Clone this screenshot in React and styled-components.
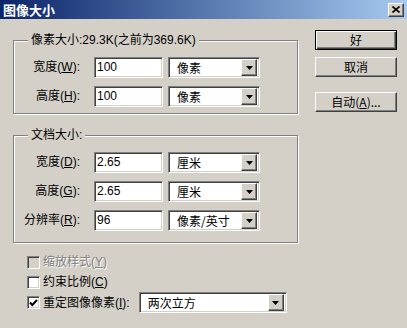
import React from "react";
import styled, { createGlobalStyle } from "styled-components";

const face = "#d4d0c8";
const shadow = "#808080";
const dark = "#404040";

const GlobalStyle = createGlobalStyle`
  html, body {
    margin: 0;
    padding: 0;
    background: ${face};
  }
  body {
    font-family: "Liberation Sans", "Noto Sans CJK SC", sans-serif;
    font-size: 12px;
    color: #000;
  }
`;

const Dialog = styled.div`
  width: 407px;
  height: 328px;
  background: ${face};
  display: flex;
  flex-direction: column;
  overflow: hidden;
`;

const TitleBar = styled.div`
  height: 19px;
  flex: none;
  display: flex;
  align-items: center;
  justify-content: space-between;
  padding: 0 3px 0 3px;
  background: linear-gradient(to right, #0a246a, #a6caf0);
`;

const Title = styled.span`
  color: #fff;
  font-family: "Noto Sans CJK SC", sans-serif;
  font-weight: bold;
  font-size: 13px;
  line-height: 19px;
`;

const raised = `
  border: 1px solid;
  border-color: #fff ${dark} ${dark} #fff;
  box-shadow: inset -1px -1px 0 ${shadow}, inset 1px 1px 0 ${face};
  background: ${face};
`;

const sunken = `
  border: 1px solid;
  border-color: ${shadow} #fff #fff ${shadow};
  box-shadow: inset 1px 1px 0 ${dark}, inset -1px -1px 0 ${face};
`;

const CloseButton = styled.div`
  width: 16px;
  height: 14px;
  box-sizing: border-box;
  ${raised}
  display: flex;
  align-items: center;
  justify-content: center;
`;

const Body = styled.div`
  display: flex;
  padding: 11px 0 0 13px;
`;

const LeftColumn = styled.div`
  width: 285px;
  padding-top: 3px;
  display: flex;
  flex-direction: column;
`;

const Group = styled.fieldset`
  margin: 0;
  margin-top: ${(p) => p.$gap || 0}px;
  padding: 0;
  width: 285px;
  box-sizing: border-box;
  border: 1px solid ${shadow};
  box-shadow: inset 1px 1px 0 #fff, 1px 1px 0 #fff;
`;

const Legend = styled.legend`
  margin-left: 14px;
  padding: 0 3px;
  line-height: 14px;
  background: ${face};
`;

const Rows = styled.div`
  display: flex;
  flex-direction: column;
  gap: 8px;
  padding: 10px 0 ${(p) => p.$bottom}px 0;
`;

const Row = styled.div`
  display: flex;
  align-items: center;
  height: 21px;
`;

const Label = styled.span`
  width: 66px;
  margin-right: 14px;
  text-align: right;
  white-space: nowrap;
  line-height: 21px;
`;

const TextBox = styled.div`
  width: 69px;
  height: 21px;
  box-sizing: border-box;
  ${sunken}
  background: #fff;
  padding-left: 2px;
  line-height: 19px;
`;

const SelectBox = styled.div`
  width: ${(p) => p.$width}px;
  height: 21px;
  margin-left: ${(p) => p.$left}px;
  box-sizing: border-box;
  ${sunken}
  background: #fff;
  padding: 2px;
  display: flex;
  align-items: center;
`;

const SelectValue = styled.span`
  flex: 1;
  padding-left: 6px;
  font-family: "Noto Sans CJK SC", sans-serif;
  line-height: 17px;
  white-space: nowrap;
`;

const ArrowButton = styled.div`
  width: 16px;
  height: 17px;
  box-sizing: border-box;
  ${raised}
  display: flex;
  align-items: center;
  justify-content: center;
`;

const Checks = styled.div`
  margin-top: 9px;
  display: flex;
  flex-direction: column;
`;

const CheckRow = styled.div`
  display: flex;
  align-items: center;
  height: ${(p) => p.$height || 20}px;
  padding-left: 14px;
  color: ${(p) => (p.$disabled ? shadow : "#000")};
  text-shadow: ${(p) => (p.$disabled ? "1px 1px 0 #fff" : "none")};
`;

const CheckBox = styled.div`
  width: 13px;
  height: 13px;
  box-sizing: border-box;
  ${sunken}
  background: ${(p) => (p.$disabled ? face : "#fff")};
  margin-right: 3px;
  display: flex;
  align-items: center;
  justify-content: center;
`;

const CheckText = styled.span`
  line-height: 20px;
  white-space: nowrap;
`;

const ButtonColumn = styled.div`
  width: 82px;
  margin-left: 17px;
  display: flex;
  flex-direction: column;
`;

const Button = styled.div`
  height: 20px;
  margin-top: ${(p) => p.$gap || 0}px;
  box-sizing: border-box;
  ${(p) =>
    p.$default
      ? `border: 1px solid #000;
         box-shadow: inset 1px 1px 0 #fff, inset -1px -1px 0 ${dark}, inset -2px -2px 0 ${shadow};
         background: ${face};`
      : raised}
  display: flex;
  align-items: center;
  justify-content: center;
  font-family: "Noto Sans CJK SC", sans-serif;
  line-height: 18px;
`;

const Arrow = () => (
  <svg width="7" height="4" viewBox="0 0 7 4">
    <path d="M0 0h7L3.5 4z" fill="#000" />
  </svg>
);

const Check = () => (
  <svg width="9" height="8" viewBox="0 0 9 8">
    <path d="M1 3.5 L3.3 6 L8 1" stroke="#000" strokeWidth="2" fill="none" />
  </svg>
);

const Select = ({ value, width = 92, left = 5 }) => (
  <SelectBox $width={width} $left={left}>
    <SelectValue>{value}</SelectValue>
    <ArrowButton>
      <Arrow />
    </ArrowButton>
  </SelectBox>
);

const Field = ({ label, u, value, unit }) => (
  <Row>
    <Label>
      {label}(<u>{u}</u>):
    </Label>
    <TextBox>{value}</TextBox>
    <Select value={unit} />
  </Row>
);

export default function App() {
  return (
    <Dialog>
      <GlobalStyle />
      <TitleBar>
        <Title>图像大小</Title>
        <CloseButton>
          <svg width="8" height="7" viewBox="0 0 8 7">
            <path d="M0.5 0.5L7.5 6.5M7.5 0.5L0.5 6.5" stroke="#000" strokeWidth="1.6" />
          </svg>
        </CloseButton>
      </TitleBar>
      <Body>
        <LeftColumn>
          <Group>
            <Legend>像素大小:29.3K(之前为369.6K)</Legend>
            <Rows $bottom={6}>
              <Field label="宽度" u="W" value="100" unit="像素" />
              <Field label="高度" u="H" value="100" unit="像素" />
            </Rows>
          </Group>
          <Group $gap={14}>
            <Legend>文档大小:</Legend>
            <Rows $bottom={11}>
              <Field label="宽度" u="D" value="2.65" unit="厘米" />
              <Field label="高度" u="G" value="2.65" unit="厘米" />
              <Field label="分辨率" u="R" value="96" unit="像素/英寸" />
            </Rows>
          </Group>
          <Checks>
            <CheckRow $disabled>
              <CheckBox $disabled />
              <CheckText>
                缩放样式(<u>Y</u>)
              </CheckText>
            </CheckRow>
            <CheckRow>
              <CheckBox />
              <CheckText>
                约束比例(<u>C</u>)
              </CheckText>
            </CheckRow>
            <CheckRow $height={21}>
              <CheckBox>
                <Check />
              </CheckBox>
              <CheckText>
                重定图像像素(<u>I</u>):
              </CheckText>
              <Select value="两次立方" width={148} left={9} />
            </CheckRow>
          </Checks>
        </LeftColumn>
        <ButtonColumn>
          <Button $default>好</Button>
          <Button $gap={7}>取消</Button>
          <Button $gap={15}>
            自动(<u>A</u>)...
          </Button>
        </ButtonColumn>
      </Body>
    </Dialog>
  );
}
